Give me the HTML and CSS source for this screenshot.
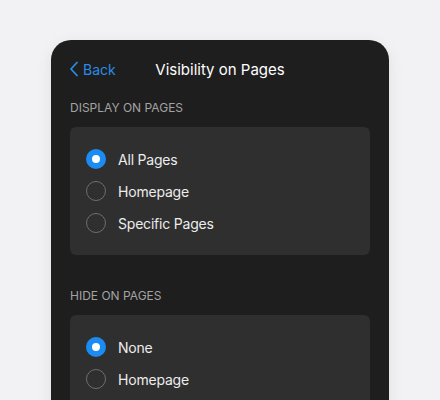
FILE: index.html
```html
<!DOCTYPE html>
<html lang="en">
<head>
    <meta charset="UTF-8">
    <meta name="viewport" content="width=device-width, initial-scale=1.0">
    <title>Visibility on Pages</title>
    <link rel="stylesheet" href="styles.css">
</head>
<body>
    <div class="panel">
        <div class="panel-header">
            <a href="#" class="back-link">
                <svg class="back-icon" width="10" height="16" viewBox="0 0 10 16" fill="none">
                    <path d="M8 1.5L2 8l6 6.5" stroke="currentColor" stroke-width="1.8" stroke-linecap="round" stroke-linejoin="round"/>
                </svg>
                Back
            </a>
            <h1 class="panel-title">Visibility on Pages</h1>
            <span></span>
        </div>

        <div class="section">
            <div class="section-label">Display on Pages</div>
            <div class="option-group">
                <label class="option">
                    <span class="radio checked"></span>
                    All Pages
                </label>
                <label class="option">
                    <span class="radio"></span>
                    Homepage
                </label>
                <label class="option">
                    <span class="radio"></span>
                    Specific Pages
                </label>
            </div>
        </div>

        <div class="section">
            <div class="section-label">Hide on Pages</div>
            <div class="option-group">
                <label class="option">
                    <span class="radio checked"></span>
                    None
                </label>
                <label class="option">
                    <span class="radio"></span>
                    Homepage
                </label>
                <label class="option">
                    <span class="radio"></span>
                    Specific Pages
                </label>
            </div>
        </div>
    </div>
</body>
</html>
```

FILE: styles.css
```css
* {
    margin: 0;
    padding: 0;
    box-sizing: border-box;
}

body {
    font-family: Inter, 'Noto Sans', sans-serif;
    background: #f2f2f5;
    color: #fff;
    padding: 40px 51px 0;
}

.panel {
    background: #1e1e1e;
    border-radius: 20px;
    padding: 14px 19px 24px;
    box-shadow: 0 4px 16px rgba(0, 0, 0, 0.08);
}

.panel-header {
    display: grid;
    grid-template-columns: 1fr auto 1fr;
    align-items: center;
    height: 30px;
}

.back-link {
    display: flex;
    align-items: center;
    gap: 4px;
    margin-left: -1px;
    color: #2a8ce6;
    text-decoration: none;
    font-size: 14px;
}

.panel-title {
    font-size: 15px;
    font-weight: 400;
    color: #fff;
}

.section {
    margin-top: 16px;
}

.section + .section {
    margin-top: 33px;
}

.section-label {
    font-size: 12px;
    line-height: 16px;
    text-transform: uppercase;
    color: #a3a3a3;
}

.option-group {
    margin-top: 11px;
    background: #2f2f2f;
    border-radius: 6px;
    padding: 16px;
}

.option {
    display: flex;
    align-items: center;
    gap: 12px;
    height: 32px;
    font-size: 14px;
    letter-spacing: -0.2px;
    color: #ececec;
}

.radio {
    width: 20px;
    height: 20px;
    border-radius: 50%;
    border: 1.5px solid #6e6e6e;
    flex-shrink: 0;
}

.radio.checked {
    border: 6px solid #1a8cf2;
    background: #fff;
}
```
